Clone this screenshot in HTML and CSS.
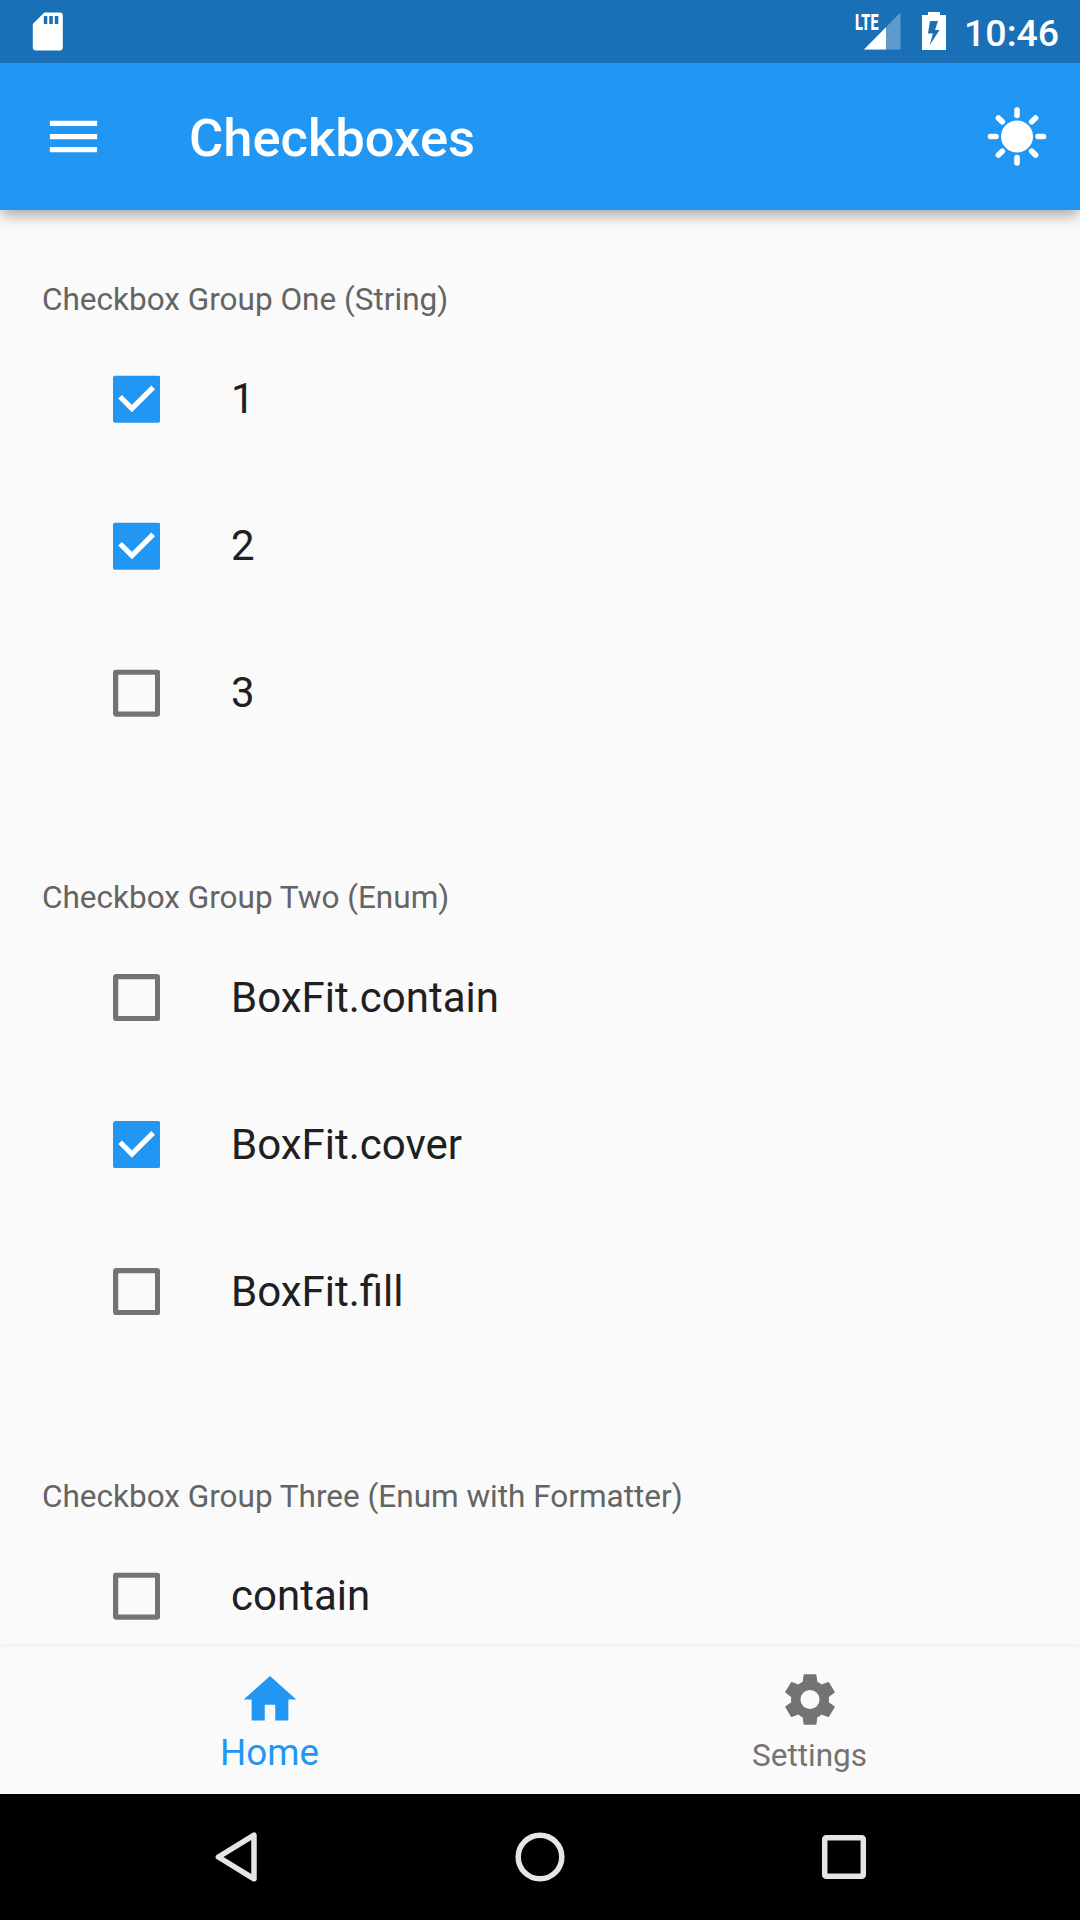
FILE: index.html
```html
<!DOCTYPE html>
<html lang="en">
<head>
<meta charset="utf-8">
<title>Checkboxes</title>
<link rel="stylesheet" href="styles.css">
</head>
<body>
<div class="screen">
  <header class="top">
    <div class="status">
      <svg class="sd" viewBox="0 0 31 39"><path fill="#fff" fill-rule="evenodd" d="M12.300 .5h15.500a3 3 0 0 1 3 3v32a3 3 0 0 1-3 3h-24a3 3 0 0 1-3-3V12zM11.800 4v8h3.500V4zM17.300 4v8h3.500V4zM22.800 4v8h3.500V4z"/></svg>
      <div class="signal">
        <svg viewBox="0 0 46 38"><path fill="#fff" fill-opacity=".3" d="M45.500 .5v37H9z"/><path fill="#fff" d="M31 15.200v22.300H9z"/><path class="gap" d="M0 0h26v18.500H0z"/></svg>
        <span class="lte">LTE</span>
      </div>
      <svg class="battery" viewBox="0 0 24 38"><path fill="#fff" fill-rule="evenodd" d="M6 0h12v3h6v35H0V3h6zM8 9L6 21.500h5L7.500 33.500 17.500 18H13L16 9z"/></svg>
      <span class="clock">10:46</span>
    </div>
    <div class="appbar">
      <svg class="icon" viewBox="0 0 24 24"><path fill="#fff" d="M3 18h18v-2H3zm0-5h18v-2H3zm0-7v2h18V6z"/></svg>
      <h1 class="title">Checkboxes</h1>
      <svg class="sun" viewBox="-30 -30.500 60 61"><circle r="16" fill="#fff"/><g stroke="#fff" stroke-width="5.600" stroke-linecap="round"><path d="M0-21v-5.500M0 21v5.500M-21 0h-5.500M21 0h5.500M14.700-14.700l3.900-3.900M14.700 14.700l3.900 3.900M-14.700 14.700l-3.900 3.900M-14.700-14.700l-3.900-3.900"/></g></svg>
    </div>
  </header>

  <main class="content">
    <section class="group">
      <h2 class="heading">Checkbox Group One (String)</h2>
      <div class="row"><svg class="box" viewBox="0 0 18 18"><rect width="18" height="18" rx="1" fill="#2196f3"/><path class="tick" d="M2.700 8.100 7.200 12.600 15.300 4.500"/></svg><span>1</span></div>
      <div class="row"><svg class="box" viewBox="0 0 18 18"><rect width="18" height="18" rx="1" fill="#2196f3"/><path class="tick" d="M2.700 8.100 7.200 12.600 15.300 4.500"/></svg><span>2</span></div>
      <div class="row"><svg class="box" viewBox="0 0 18 18"><rect class="empty" x="1" y="1" width="16" height="16" rx=".3"/></svg><span>3</span></div>
    </section>
    <section class="group">
      <h2 class="heading">Checkbox Group Two (Enum)</h2>
      <div class="row"><svg class="box" viewBox="0 0 18 18"><rect class="empty" x="1" y="1" width="16" height="16" rx=".3"/></svg><span>BoxFit.contain</span></div>
      <div class="row"><svg class="box" viewBox="0 0 18 18"><rect width="18" height="18" rx="1" fill="#2196f3"/><path class="tick" d="M2.700 8.100 7.200 12.600 15.300 4.500"/></svg><span>BoxFit.cover</span></div>
      <div class="row"><svg class="box" viewBox="0 0 18 18"><rect class="empty" x="1" y="1" width="16" height="16" rx=".3"/></svg><span>BoxFit.fill</span></div>
    </section>
    <section class="group">
      <h2 class="heading">Checkbox Group Three (Enum with Formatter)</h2>
      <div class="row"><svg class="box" viewBox="0 0 18 18"><rect class="empty" x="1" y="1" width="16" height="16" rx=".3"/></svg><span>contain</span></div>
    </section>
  </main>

  <nav class="tabs">
    <div class="tab active">
      <svg class="icon" viewBox="0 0 24 24"><path fill="currentColor" d="M10 20v-6h4v6h5v-8h3L12 3 2 12h3v8z"/></svg>
      <span>Home</span>
    </div>
    <div class="tab">
      <svg class="icon" viewBox="-12 -12 24 24"><path fill="currentColor" fill-rule="evenodd" d="M-2.100-9.600H2.100L2.450-9.400 2.800-6.800Q3.700-6.400 4.400-5.700L6.900-6.650 7.300-6.500 9.450-2.900 9.300-2.550 7.150-1Q7.300 0 7.150 1L9.300 2.550 9.450 2.900 7.300 6.500 6.900 6.650 4.400 5.700Q3.700 6.400 2.800 6.800L2.450 9.400 2.100 9.600H-2.100L-2.450 9.400-2.800 6.800Q-3.700 6.400-4.400 5.700L-6.900 6.650-7.300 6.500-9.450 2.900-9.300 2.550-7.150 1Q-7.300 0-7.150-1L-9.300-2.550-9.450-2.900-7.300-6.500-6.900-6.650-4.400-5.700Q-3.700-6.400-2.800-6.800L-2.450-9.400zM0-3.650a3.650 3.650 0 1 0 0 7.300 3.650 3.650 0 0 0 0-7.300z"/></svg>
      <span>Settings</span>
    </div>
  </nav>

  <footer class="system">
    <svg viewBox="0 0 50 50"><path d="M43 3.200v43.600L7.400 25z"/></svg>
    <svg viewBox="0 0 50 50"><circle cx="25" cy="25" r="21.800"/></svg>
    <svg viewBox="0 0 50 50"><rect x="5.700" y="5.700" width="38.600" height="38.600" rx="1.500"/></svg>
  </footer>
</div>
</body>
</html>
```
FILE: styles.css
```css
* { box-sizing: border-box; }

body {
  margin: 0;
  font-family: Roboto, "Liberation Sans", sans-serif;
  background: #fafafa;
}

svg { display: block; flex: none; }

.screen {
  display: flex;
  flex-direction: column;
  width: 1080px;
  height: 1920px;
  overflow: hidden;
}

.top {
  position: relative;
  z-index: 1;
  flex: none;
  height: 210px;
  background: #2196f3;
  color: #fff;
  box-shadow: 0 8px 14px -2px rgba(0, 0, 0, .28), 0 2px 10px rgba(0, 0, 0, .08);
}

.status {
  display: flex;
  align-items: flex-start;
  height: 63px;
  padding: 12px 23px 0 32px;
  background: #1970b6;
}

.sd { width: 31px; height: 39px; }

.signal {
  position: relative;
  width: 46px;
  height: 38px;
  margin-left: auto;
}

.signal .gap { fill: #1970b6; }

.lte {
  position: absolute;
  top: -3px;
  left: 0;
  font-size: 22.500px;
  font-weight: 900;
  line-height: 26px;
  transform: scaleX(.64);
  transform-origin: left;
}

.battery { width: 24px; height: 38px; margin-left: 21px; }

.clock {
  width: 93px;
  margin-left: 18px;
  font-size: 37.500px;
  font-weight: 500;
  line-height: 42px;
  text-align: right;
}

.appbar {
  display: flex;
  align-items: center;
  height: 147px;
  padding: 0 33px 0 42px;
}

.icon { width: 63px; height: 63px; }

.title {
  margin: 0 auto 0 84px;
  padding-top: 3px;
  font-size: 52.500px;
  font-weight: 500;
  line-height: 63px;
}

.sun { width: 60px; height: 61px; }

.content {
  flex: 1;
  min-height: 0;
  overflow: hidden;
}

.group { height: 598.500px; }

.heading {
  height: 115.500px;
  margin: 0;
  padding: 70.500px 42px 0;
  font-size: 31.500px;
  font-weight: 400;
  line-height: 38px;
  color: #646464;
}

.row {
  display: flex;
  align-items: center;
  gap: 70.900px;
  height: 147px;
  padding-left: 112.900px;
  font-size: 42px;
  line-height: 50px;
  color: #202020;
}

.box { width: 47.250px; height: 47.250px; }
.group:nth-child(odd) .box { transform: translateY(.5px); }
.tick { fill: none; stroke: #fff; stroke-width: 2; }
.empty { fill: none; stroke: #737373; stroke-width: 2; }

.tabs {
  position: relative;
  z-index: 1;
  display: flex;
  flex: none;
  height: 147px;
  background: #fafafa;
  box-shadow: 0 0 8px rgba(0, 0, 0, .08);
}

.tab {
  display: flex;
  flex: 1;
  flex-direction: column;
  align-items: center;
  padding: 21px 1px 0 0;
  font-size: 31.500px;
  line-height: 50px;
  color: #737373;
}

.tab .icon { transform: translateX(.5px); }
.tab.active { font-size: 36.750px; line-height: 44px; color: #2196f3; }

.system {
  position: relative;
  z-index: 2;
  display: flex;
  flex: none;
  align-items: center;
  justify-content: center;
  gap: 254px;
  height: 126px;
  background: #000;
}

.system svg {
  width: 50px;
  height: 50px;
  fill: none;
  stroke: #e5e5e5;
  stroke-width: 5.500;
  stroke-linejoin: round;
}
```
